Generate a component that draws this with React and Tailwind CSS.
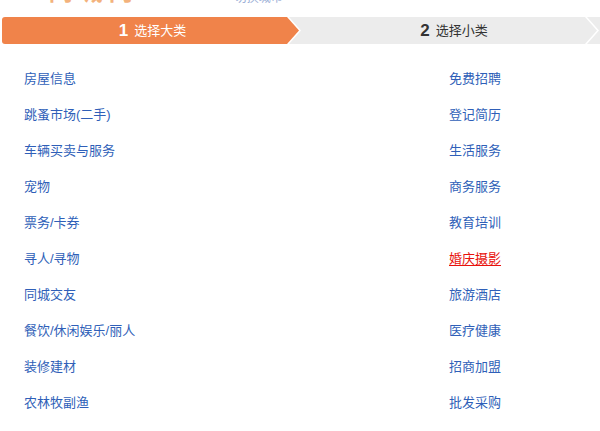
import React from 'react';

const LEFT = ['房屋信息', '跳蚤市场(二手)', '车辆买卖与服务', '宠物', '票务/卡券', '寻人/寻物', '同城交友', '餐饮/休闲娱乐/丽人', '装修建材', '农林牧副渔'];
const RIGHT = ['免费招聘', '登记简历', '生活服务', '商务服务', '教育培训', '婚庆摄影', '旅游酒店', '医疗健康', '招商加盟', '批发采购'];

const font = { fontFamily: '"Liberation Sans", "Noto Sans CJK SC", sans-serif' };

function Link({ text }){
  const hot = text === '婚庆摄影';
  return (
    <a href="#" className={hot ? 'text-[#e8120c] underline underline-offset-2' : 'text-[#2f5fb8] no-underline'}>
      {text}
    </a>
  );
}

export default function App(){
  return (
    <div className="w-[600px] h-[431px] bg-white overflow-hidden text-[13px]" style={font}>
      {/* header, scrolled off the top */}
      <div className="h-[17px]">
        <div className="h-[4px] overflow-hidden flex items-end">
          <span className="pl-[10px] text-[#f3b27c] text-[24px] font-bold leading-none tracking-[6px]">58同城网</span>
          <span className="ml-[96px] text-[#9aaed6] text-[12px] leading-none">切换城市</span>
        </div>
      </div>

      {/* steps */}
      <div className="flex h-[27px] pl-[2px] overflow-hidden">
        <div
          className="w-[297px] shrink-0 pl-[4px] bg-[#f0834a] rounded-l-[3px] flex items-center justify-center text-white"
          style={{ clipPath: 'polygon(0 0, calc(100% - 12px) 0, 100% 50%, calc(100% - 12px) 100%, 0 100%)' }}
        >
          <span className="text-[17px] font-bold mr-[6px] leading-none">1</span>
          <span className="leading-none">选择大类</span>
        </div>
        <div
          className="w-[308px] shrink-0 -ml-[10px] pl-[22px] bg-[#ececec] flex items-center justify-center text-[#333]"
          style={{ clipPath: 'polygon(0 0, calc(100% - 12px) 0, 100% 50%, calc(100% - 12px) 100%, 0 100%, 12px 50%)' }}
        >
          <span className="text-[17px] font-bold mr-[6px] leading-none">2</span>
          <span className="leading-none">选择小类</span>
        </div>
        <div
          className="w-[60px] shrink-0 -ml-[10px] bg-[#ececec]"
          style={{ clipPath: 'polygon(0 0, 100% 0, 100% 100%, 0 100%, 12px 50%)' }}
        />
      </div>

      {/* categories */}
      <div className="mt-[17px] pl-[24px] grid grid-cols-[425px_1fr]">
        {LEFT.map((l, i) => (
          <React.Fragment key={l}>
            <div className="h-[36px] flex items-center"><Link text={l} /></div>
            <div className="h-[36px] flex items-center"><Link text={RIGHT[i]} /></div>
          </React.Fragment>
        ))}
      </div>
    </div>
  );
}
